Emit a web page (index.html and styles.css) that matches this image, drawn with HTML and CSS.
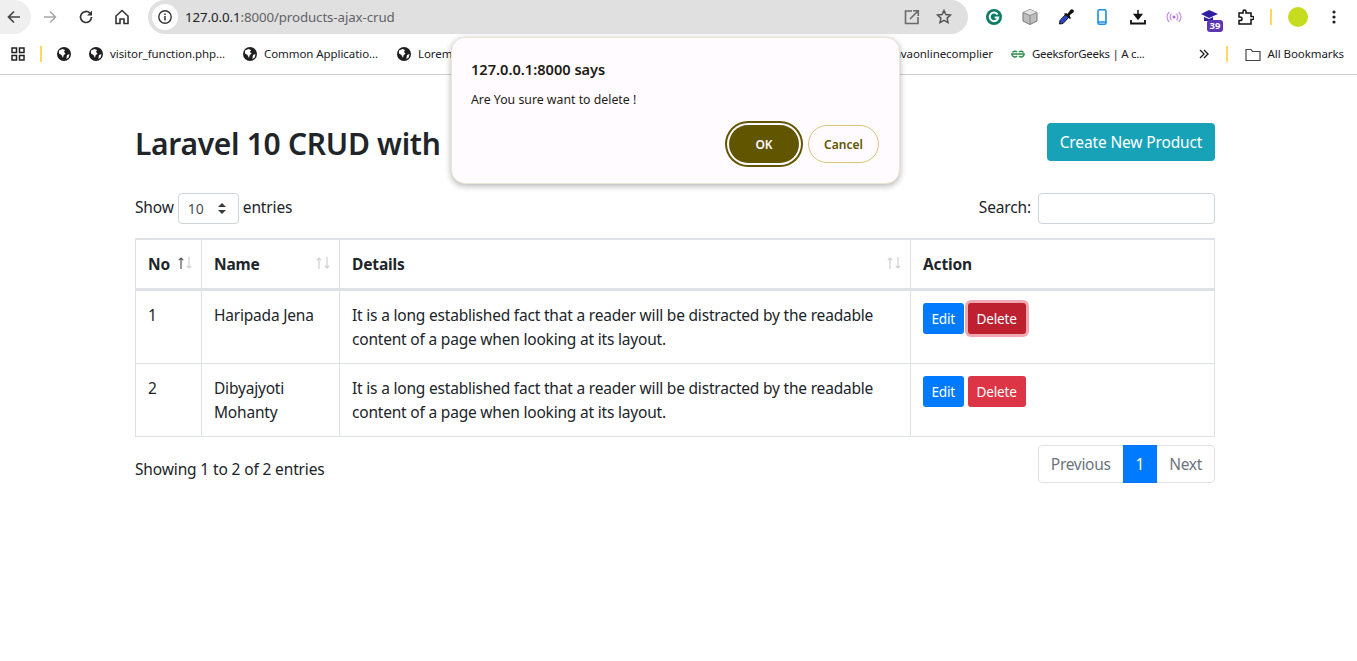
FILE: index.html
```html
<!DOCTYPE html>
<html lang="en">
<head>
    <meta charset="UTF-8">
    <meta name="viewport" content="width=device-width, initial-scale=1.0">
    <title>Products</title>
    <link rel="stylesheet" href="styles.css">
</head>
<body>
    <svg width="0" height="0" class="defs">
        <symbol id="globe" viewBox="0 0 14 14">
            <circle cx="7" cy="7" r="7" fill="#1f1f1f"/>
            <path d="M2 3.500 5.500 2 8 3 7 5 8.500 6.500 6.500 8.500 6 11 4.500 8 2 6.500ZM10 8l2.500-1-.8 3.500-2.400 1.500Z" fill="#fff"/>
        </symbol>
        <symbol id="sort-arrows" viewBox="0 0 14 12">
            <path class="arrow-up" d="M3 12V1M.8 3.200 3 1l2.200 2.200" fill="none" stroke-width="1.200"/>
            <path class="arrow-down" d="M11 0v11M8.800 8.800 11 11l2.200-2.200" fill="none" stroke="#d0d0d0" stroke-width="1.200"/>
        </symbol>
    </svg>

    <div class="toolbar">
        <div class="nav-btn nav-back">
            <svg width="16" height="16" viewBox="0 0 16 16"><path d="M14 8H3M8 2.500 2.500 8 8 13.500" fill="none" stroke="#444" stroke-width="1.700"/></svg>
        </div>
        <div class="nav-btn">
            <svg width="16" height="16" viewBox="0 0 16 16"><path d="M2 8h11M8 2.500 13.500 8 8 13.500" fill="none" stroke="#a8a8a8" stroke-width="1.500"/></svg>
        </div>
        <div class="nav-btn">
            <svg width="16" height="16" viewBox="0 0 16 16"><path d="M13.500 8a5.500 5.500 0 1 1-1.700-4" fill="none" stroke="#333" stroke-width="1.700"/><path d="M14 1.500v5H9z" fill="#333"/></svg>
        </div>
        <div class="nav-btn">
            <svg width="16" height="16" viewBox="0 0 16 16"><path d="M8 1.500 2 7v7.500h4V10h4v4.500h4V7Z" fill="none" stroke="#333" stroke-width="1.600"/></svg>
        </div>
        <div class="omnibox">
            <span class="site-info">
                <svg width="16" height="16" viewBox="0 0 16 16"><circle cx="8" cy="8" r="6.200" fill="none" stroke="#333" stroke-width="1.400"/><path d="M8 7v4.400M8 4.400v1.500" stroke="#333" stroke-width="1.500"/></svg>
            </span>
            <span class="url"><b>127.0.0.1</b>:8000/products-ajax-crud</span>
            <svg class="omni-icon" width="18" height="18" viewBox="0 0 18 18"><path d="M9 3H2.500v12.500H15V9" fill="none" stroke="#6a6a6a" stroke-width="1.600"/><path d="M7 11l8-8M10 2.700h5.300V8" fill="none" stroke="#6a6a6a" stroke-width="1.600"/></svg>
            <svg class="omni-icon" width="18" height="18" viewBox="0 0 18 18"><path d="M9 2.500l1.900 4.100 4.500.5-3.300 3 .9 4.500L9 12.400l-4 2.200.9-4.500-3.300-3 4.500-.5Z" fill="none" stroke="#555" stroke-width="1.500"/></svg>
        </div>
        <div class="ext-list">
            <svg class="ext" width="16" height="16" viewBox="0 0 16 16"><circle cx="8" cy="8" r="8" fill="#0b7d64"/><path d="M11.600 5.500A4.300 4.300 0 1 0 12.300 8.500H8.700" fill="none" stroke="#fff" stroke-width="2"/></svg>
            <svg class="ext" width="16" height="16" viewBox="0 0 16 16"><path d="M8 .5 15 3.500v8.500L8 15.500 1 12V3.500Z" fill="#bdbdbd" stroke="#777"/><path d="M8 .5 15 3.500 8 6.500 1 3.500Z" fill="#e2e2e2"/><path d="M1 3.500 8 6.500 15 3.500M8 6.500v9" fill="none" stroke="#8a8a8a"/></svg>
            <svg class="ext" width="16" height="16" viewBox="0 0 16 16"><path d="M8.500 4.500 11.500 7.500 5 14.500 1.500 15 2 11.500Z" fill="#2a44c8" stroke="#111"/><path d="M7 4 9 5.500l1.500-2L12.500.8a1.500 1.500 0 0 1 2.700 2.700L12.500 5.500l-1 1.500 1.500 2-1 1L6 5Z" fill="#111"/></svg>
            <svg class="ext" width="10" height="16" viewBox="0 0 10 16"><rect x="1" y=".8" width="8" height="14.400" rx="1.500" fill="none" stroke="#1a8fe3" stroke-width="1.600"/><path d="M1 13h8" stroke="#1a8fe3" stroke-width="1.500"/></svg>
            <svg class="ext" width="16" height="16" viewBox="0 0 16 16"><path d="M8 1v8M4.500 5.500h7L8 10Z" fill="#111" stroke="#111" stroke-width="1.500"/><path d="M1 11v3.500h14V11" fill="none" stroke="#111" stroke-width="1.800"/></svg>
            <svg class="ext" width="16" height="16" viewBox="0 0 16 16"><circle cx="8" cy="8" r="1.500" fill="#b569d8"/><path d="M5.500 4.800a4.500 4.500 0 0 0 0 6.400M10.500 4.800a4.500 4.500 0 0 1 0 6.400M3.200 3a7 7 0 0 0 0 10M12.800 3a7 7 0 0 1 0 10" fill="none" stroke="#c98be6" stroke-width="1.200"/></svg>
            <div class="ext ext-badged">
                <svg width="18" height="14" viewBox="0 0 18 14"><path d="M9 1 18 5 9 9 1 5Z" fill="#2d1fa0"/><path d="M4 8v4h9V8L9 10Z" fill="#2d1fa0"/></svg>
                <span class="badge-count">39</span>
            </div>
            <svg class="ext ext-puzzle" width="16" height="16" viewBox="0 0 16 16"><path d="M1 4h4V2.500a1.500 1.500 0 0 1 3 0V4h5v3.500h1.500a1.500 1.500 0 0 1 0 3H13V15H1v-3.500h1.200a1.800 1.800 0 0 0 0-3.600H1Z" fill="none" stroke="#111" stroke-width="1.500"/></svg>
            <span class="sep-yellow sep-tool"></span>
            <span class="avatar"></span>
            <svg class="ext" width="4" height="14" viewBox="0 0 4 14"><circle cx="2" cy="2" r="1.600" fill="#222"/><circle cx="2" cy="7" r="1.600" fill="#222"/><circle cx="2" cy="12" r="1.600" fill="#222"/></svg>
        </div>
    </div>

    <div class="bookmarks">
        <svg class="apps" width="14" height="14" viewBox="0 0 14 14"><path d="M1 1h4.500v4.500H1zM8.500 1H13v4.500H8.500zM1 8.500h4.500V13H1zM8.500 8.500H13V13H8.500z" fill="none" stroke="#222" stroke-width="1.500"/></svg>
        <span class="sep-yellow"></span>
        <svg class="mark-icon mark-first" width="14" height="14"><use href="#globe"/></svg>
        <a class="mark mark-visitor"><svg class="mark-icon" width="14" height="14"><use href="#globe"/></svg>visitor_function.php...</a>
        <a class="mark mark-common"><svg class="mark-icon" width="14" height="14"><use href="#globe"/></svg>Common Applicatio...</a>
        <a class="mark"><svg class="mark-icon" width="14" height="14"><use href="#globe"/></svg>Lorem Ipsum</a>
        <div class="marks-right">
            <a class="mark">javaonlinecomplier</a>
            <a class="mark mark-gfg">
                <svg class="mark-icon" width="14" height="8" viewBox="0 0 14 8"><path d="M7 4H.8A3 3 0 0 0 6 6M7 4h6.200A3 3 0 0 1 8 6M1.500 2.500A3 3 0 0 1 6 2M12.500 2.500A3 3 0 0 0 8 2" fill="none" stroke="#2a8d4a" stroke-width="1.400"/></svg>
                GeeksforGeeks | A c...
            </a>
            <svg class="more" width="10" height="10" viewBox="0 0 10 10"><path d="M1 1l4 4-4 4M5 1l4 4-4 4" fill="none" stroke="#222" stroke-width="1.400"/></svg>
            <span class="sep-yellow"></span>
            <a class="mark mark-all">
                <svg class="mark-icon" width="16" height="13" viewBox="0 0 16 13"><path d="M1 1.500h5l1.500 2H15v9H1Z" fill="none" stroke="#444" stroke-width="1.200"/></svg>
                All Bookmarks
            </a>
        </div>
    </div>

    <div class="page">
        <div class="title-row">
            <h2>Laravel 10 CRUD with</h2>
            <a class="btn btn-create">Create New Product</a>
        </div>

        <div class="table-controls">
            <label class="length">Show
                <span class="select">10
                    <svg width="8" height="11" viewBox="0 0 8 11"><path d="M4 0 8 4H0ZM4 11 0 7h8Z" fill="#343a40"/></svg>
                </span>
                entries</label>
            <label class="search">Search: <span class="search-input"></span></label>
        </div>

        <table class="products">
            <colgroup>
                <col class="col-no"><col class="col-name"><col class="col-details"><col class="col-action">
            </colgroup>
            <thead>
                <tr>
                    <th>No<svg class="sort sort-asc" width="14" height="12"><use href="#sort-arrows"/></svg></th>
                    <th>Name<svg class="sort" width="14" height="12"><use href="#sort-arrows"/></svg></th>
                    <th>Details<svg class="sort" width="14" height="12"><use href="#sort-arrows"/></svg></th>
                    <th>Action</th>
                </tr>
            </thead>
            <tbody>
                <tr>
                    <td>1</td>
                    <td>Haripada Jena</td>
                    <td>It is a long established fact that a reader will be distracted by the readable content of a page when looking at its layout.</td>
                    <td><a class="btn btn-sm btn-edit">Edit</a><a class="btn btn-sm btn-delete is-focused">Delete</a></td>
                </tr>
                <tr>
                    <td>2</td>
                    <td>Dibyajyoti Mohanty</td>
                    <td>It is a long established fact that a reader will be distracted by the readable content of a page when looking at its layout.</td>
                    <td><a class="btn btn-sm btn-edit">Edit</a><a class="btn btn-sm btn-delete">Delete</a></td>
                </tr>
            </tbody>
        </table>

        <div class="table-footer">
            <div class="info">Showing 1 to 2 of 2 entries</div>
            <div class="pagination">
                <a class="page-link">Previous</a>
                <a class="page-link active">1</a>
                <a class="page-link">Next</a>
            </div>
        </div>
    </div>

    <div class="dialog">
        <div class="dialog-title">127.0.0.1:8000 says</div>
        <div class="dialog-text">Are You sure want to delete !</div>
        <div class="dialog-actions">
            <button class="dialog-ok">OK</button>
            <button class="dialog-cancel">Cancel</button>
        </div>
    </div>
</body>
</html>
```

FILE: styles.css
```css
* {
    box-sizing: border-box;
}
body {
    margin: 0;
    font-family: "Noto Sans", "Open Sans", sans-serif;
    font-size: 15.5px;
    letter-spacing: -.14px;
    line-height: 24px;
    color: #212529;
    background: #fff;
}
.defs {
    position: absolute;
}
svg {
    display: block;
    flex: none;
}

/* browser chrome */
.toolbar {
    height: 37px;
    display: flex;
    align-items: flex-start;
    letter-spacing: 0;
}
.nav-btn {
    width: 36px;
    height: 34px;
    display: flex;
    align-items: center;
    justify-content: center;
}
.nav-back {
    width: 31px;
    padding-right: 3px;
    margin-right: 1px;
    background: #efefef;
    border-radius: 0 17px 17px 0;
}
.omnibox {
    width: 820px;
    height: 34px;
    margin-left: 8px;
    padding: 0 15px 0 4px;
    display: flex;
    align-items: center;
    background: #e0e0e0;
    border-radius: 17px;
}
.site-info {
    width: 26px;
    height: 26px;
    display: flex;
    align-items: center;
    justify-content: center;
    background: #fff;
    border-radius: 50%;
}
.url {
    flex: 1;
    margin-left: 7px;
    font-size: 13.3px;
    letter-spacing: -.1px;
    color: #5f6368;
}
.url b {
    font-weight: 400;
    color: #202124;
}
.omni-icon {
    margin-left: 14px;
}
.ext-list {
    flex: 1;
    height: 34px;
    display: flex;
    align-items: center;
    padding-left: 18px;
    position: relative;
}
.ext {
    margin-right: 20px;
}
.ext:nth-child(4) {
    margin-left: 3px;
    margin-right: 23px;
}
.ext:nth-child(6) {
    margin-right: 18px;
}
.ext-badged {
    width: 22px;
    height: 24px;
    margin-right: 16px;
    position: relative;
}
.ext-badged svg {
    margin-top: 4px;
}
.ext-puzzle {
    margin-right: 16px;
}
.badge-count {
    position: absolute;
    left: 7px;
    top: 15px;
    width: 16px;
    height: 12px;
    font-size: 9.5px;
    font-weight: 700;
    line-height: 12px;
    text-align: center;
    color: #fff;
    background: #5e35b1;
    border-radius: 3px;
}
.sep-yellow {
    width: 2px;
    height: 16px;
    flex: none;
    background: #ffd75e;
}
.sep-tool {
    margin-right: 16px;
}
.avatar {
    width: 20px;
    height: 20px;
    margin-right: 24px;
    background: #c6dc1e;
    border-radius: 50%;
}
.bookmarks {
    height: 38px;
    padding: 0 13px 3px 11px;
    display: flex;
    align-items: center;
    border-bottom: 1px solid #d0d0d0;
    font-size: 11.5px;
    letter-spacing: -.07px;
    color: #202124;
    white-space: nowrap;
}
.apps {
    margin-right: 15px;
}
.bookmarks > .sep-yellow {
    margin-right: 15px;
}
.mark {
    display: flex;
    align-items: center;
}
.mark > .mark-icon {
    margin-right: 7px;
}
.mark-first {
    margin-right: 18px;
}
.mark-visitor {
    width: 154px;
}
.mark-common {
    width: 154px;
}
.marks-right {
    margin-left: auto;
    display: flex;
    align-items: center;
}
.mark-gfg {
    margin-left: 18px;
    letter-spacing: -.3px;
}
.more {
    margin-left: 54px;
    margin-right: 17px;
}
.mark-all {
    margin-left: 17px;
}

/* page */
.page {
    padding: 48px 142px 0 135px;
}
.title-row {
    display: flex;
    justify-content: space-between;
    align-items: flex-start;
    margin-bottom: 28px;
}
h2 {
    margin: 0;
    font-size: 30px;
    font-weight: 600;
    letter-spacing: -.3px;
    line-height: 42px;
}
.btn {
    display: inline-block;
    border-radius: 4px;
    color: #fff;
    text-align: center;
}
.btn-create {
    width: 168px;
    height: 38px;
    line-height: 38px;
    background: #17a2b8;
}
.table-controls {
    height: 31px;
    margin-bottom: 14px;
    display: flex;
    justify-content: space-between;
    align-items: center;
}
.length,
.search {
    display: flex;
    align-items: flex-start;
    line-height: 29px;
}
.select {
    width: 61px;
    height: 31px;
    margin: 0 4px;
    padding: 0 12px 0 9px;
    display: flex;
    align-items: center;
    justify-content: space-between;
    font-size: 14px;
    color: #495057;
    border: 1px solid #ced4da;
    border-radius: 4px;
}
.search-input {
    width: 177px;
    height: 31px;
    margin-left: 7px;
    border: 1px solid #ced4da;
    border-radius: 4px;
}
.products {
    width: 1080px;
    table-layout: fixed;
    border-collapse: collapse;
    border: 1px solid #dee2e6;
}
.col-no { width: 66px; }
.col-name { width: 138px; }
.col-details { width: 571px; }
.products th,
.products td {
    padding: 12px;
    border: 1px solid #dee2e6;
    vertical-align: top;
    text-align: left;
}
.products th {
    position: relative;
    height: 50px;
    border-top-width: 2px;
    border-bottom-width: 3px;
    font-weight: 700;
}
.products td {
    height: 73px;
    letter-spacing: -.2px;
}
.sort {
    position: absolute;
    right: 9px;
    top: 17px;
    stroke: #d0d0d0;
}
.sort-asc {
    stroke: #555;
}
.btn-sm {
    height: 31px;
    padding: 0 9px;
    font-size: 13.6px;
    line-height: 31px;
    border-radius: 3px;
}
.btn-edit {
    padding: 0 8.5px;
    background: #007bff;
}
.btn-delete {
    margin-left: 4px;
    background: #dc3545;
}
.is-focused {
    background: #bd2130;
    box-shadow: 0 0 0 3px #f2a8b0;
}
.table-footer {
    display: flex;
    justify-content: space-between;
    margin-top: 8px;
}
.info {
    padding-top: 12px;
}
.pagination {
    height: 38px;
    display: flex;
    border: 1px solid #dee2e6;
    border-radius: 4px;
}
.page-link {
    padding: 6px 12px;
    letter-spacing: -.3px;
    color: #6c757d;
}
.page-link.active {
    margin: -1px 0;
    padding: 7px 13px;
    color: #fff;
    background: #007bff;
}

/* alert box, sits over the page */
.dialog {
    position: absolute;
    left: 451px;
    top: 37px;
    width: 449px;
    height: 147px;
    padding: 21px 19px 0;
    background: #fffbff;
    border: 1px solid #ebe5d3;
    border-radius: 14px;
    box-shadow: 0 2px 6px rgba(0, 0, 0, .3);
    letter-spacing: 0;
}
.dialog-title {
    font-size: 14.6px;
    font-weight: 600;
    line-height: 20px;
    color: #1d1b16;
}
.dialog-text {
    margin-top: 11px;
    font-size: 12.3px;
    line-height: 20px;
    color: #1d1b16;
}
.dialog-actions {
    position: absolute;
    right: 20px;
    top: 87px;
    display: flex;
    align-items: center;
}
.dialog-ok,
.dialog-cancel {
    height: 38px;
    font-family: inherit;
    font-size: 12px;
    font-weight: 600;
    border-radius: 19px;
}
.dialog-ok {
    width: 70px;
    margin-right: 9px;
    color: #fffbff;
    background: #615500;
    border: none;
    box-shadow: 0 0 0 2px #fffbff, 0 0 0 4px #615500;
}
.dialog-cancel {
    width: 71px;
    color: #615500;
    background: transparent;
    border: 1px solid #d9c777;
}
```
